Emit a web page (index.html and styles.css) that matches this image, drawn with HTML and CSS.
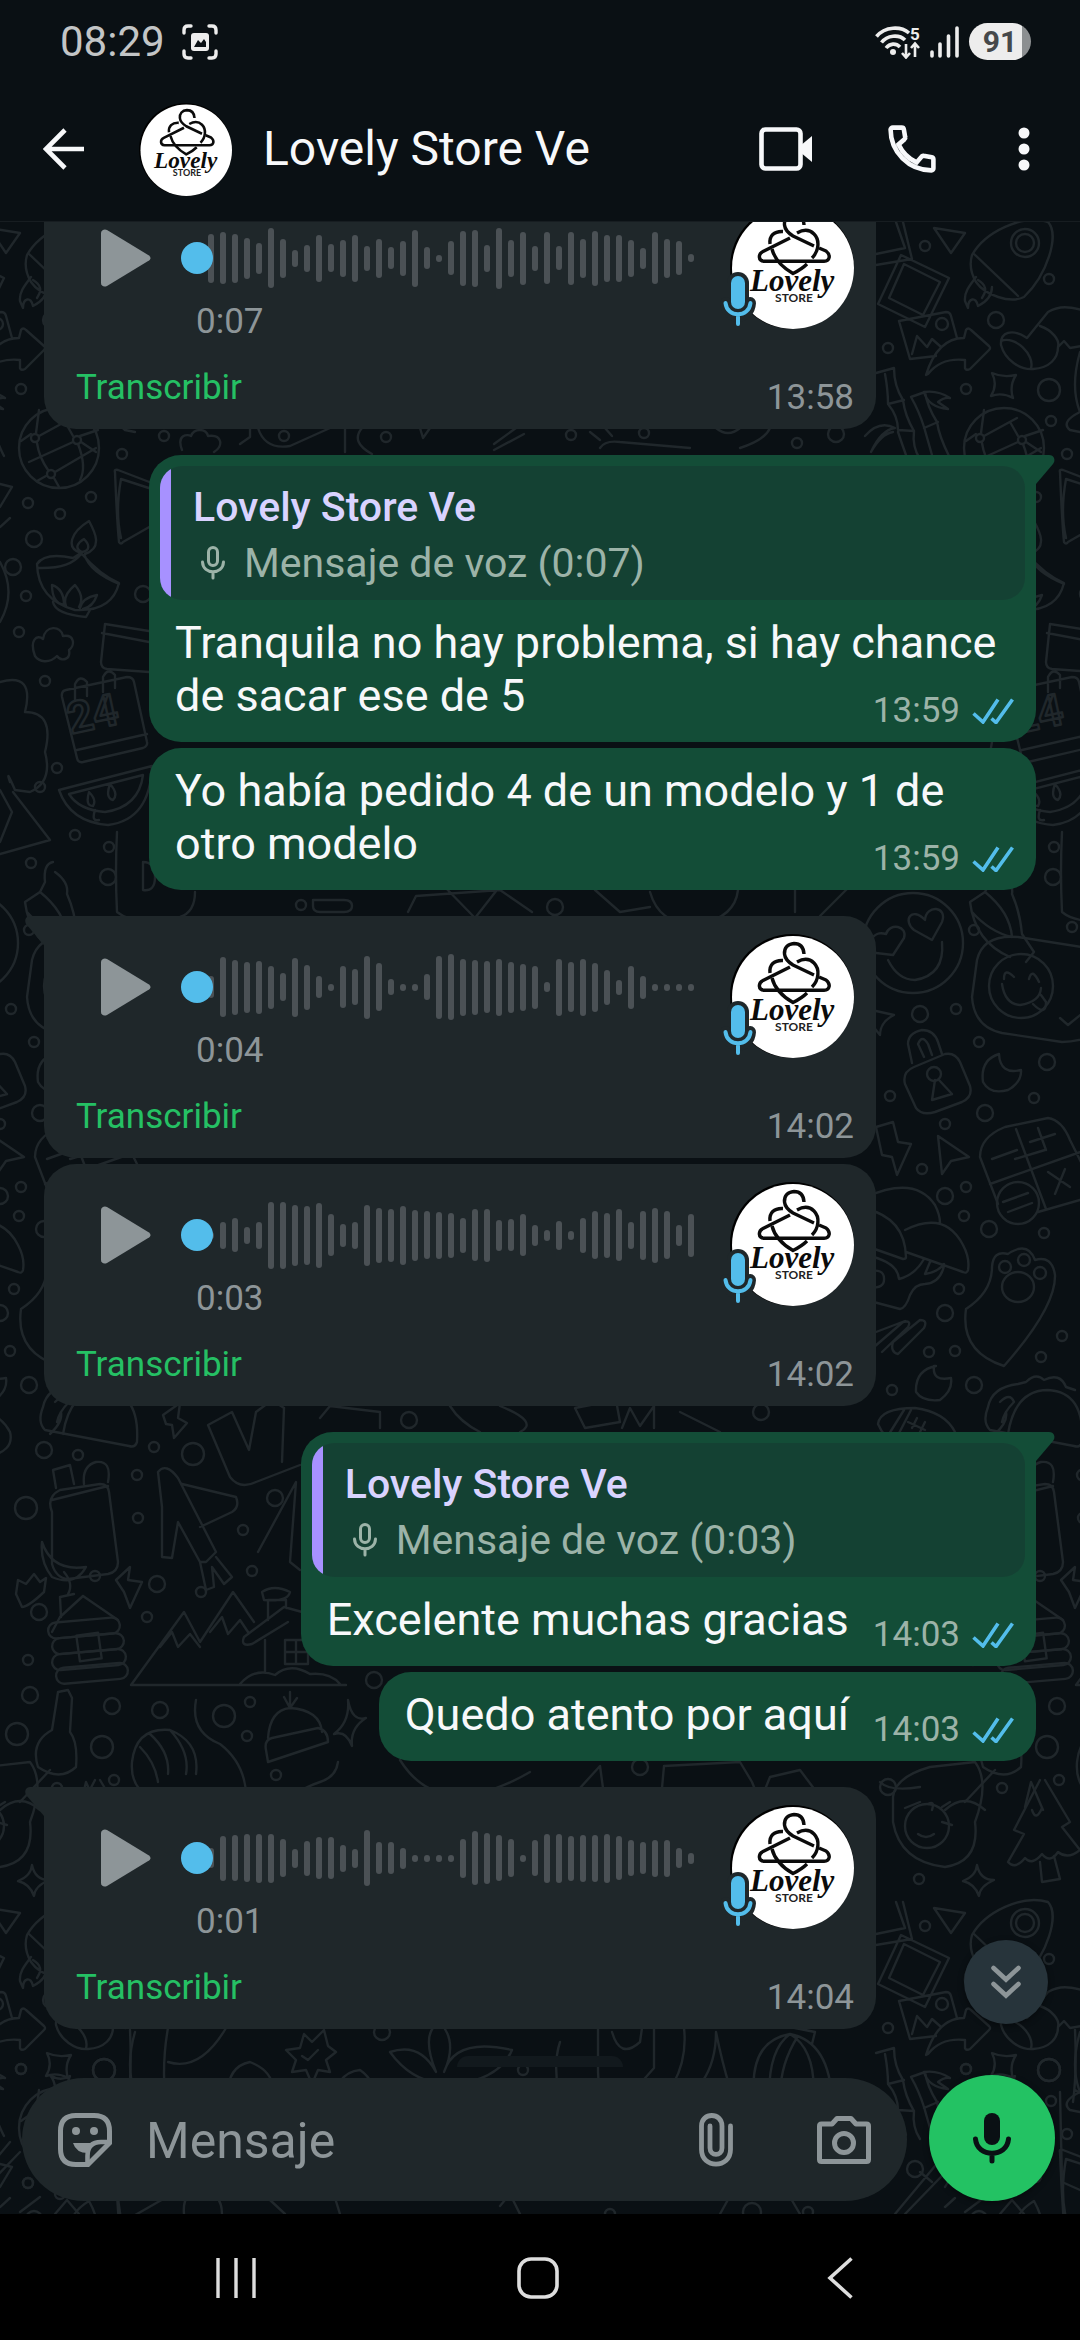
FILE: index.html
```html
<!DOCTYPE html>
<html lang="es">
<head>
<meta charset="utf-8">
<meta name="viewport" content="width=device-width, initial-scale=1">
<title>Lovely Store Ve</title>
<link rel="stylesheet" href="styles.css">
</head>
<body>

<svg class="sprite" aria-hidden="true">
  <symbol id="logo-art" viewBox="0 0 124 124">
    <circle cx="62" cy="62" r="62" fill="#000"/>
    <circle cx="63" cy="63" r="61" fill="#fff"/>
    <g fill="none" stroke="#0b0b0b" stroke-width="3.4" stroke-linecap="butt" stroke-linejoin="round">
      <path d="M40 39C39 31 44 26 53 26.500"/>
      <path d="M67 28C74 24 80 25 84 29C90 35 89 46 82 53"/>
      <path d="M42 44C44 52 50 61 63 68.500C70 65 74 62 77 59"/>
      <path d="M60 33L33 46.500C28 49 28 56 34 56.300H94C100 56 101 50 96 46L89 43"/>
      <path d="M74 20C73.500 12 69 9.500 64 9.500C57.500 10 54 14 54.500 20C55 25 59 28.500 63 31L84 41"/>
    </g>
  </symbol>
  <symbol id="play" viewBox="0 0 50 58">
    <path d="M4 0.500C2 0.500 0 2 0 4V54C0 57 3 58.500 6 57L48 31.500C50 30 50 28 48 26.500L6 1Z" fill="currentColor"/>
  </symbol>
  <symbol id="mic-badge" viewBox="0 0 40 60">
    <g fill="none" stroke="#1f272a" stroke-linecap="round">
      <path d="M20 12V31" stroke-width="22"/>
      <path d="M8 32C9 49 31 49 32 32" stroke-width="12"/>
    </g>
    <g fill="none" stroke="#53bdeb" stroke-linecap="round">
      <path d="M20 12V31" stroke-width="14"/>
      <path d="M7.500 32C9 47 31 47 32.500 32M20 44V53" stroke-width="4"/>
    </g>
  </symbol>
  <symbol id="mic-line" viewBox="0 0 24 34">
    <g fill="none" stroke="currentColor" stroke-width="3" stroke-linecap="round">
      <rect x="7.500" y="1.500" width="9" height="18" rx="4.500"/>
      <path d="M1.500 16C2 29 22 29 22.500 16M12 26V32"/>
    </g>
  </symbol>
  <symbol id="ticks" viewBox="0 0 42 26">
    <path d="M1.500 15.500L11 24L26 1.500M19.500 20.500L24 24.500L40.500 1.500" fill="none" stroke="#53bdeb" stroke-width="3.600"/>
  </symbol>
</svg>

<header class="top">
  <div class="status">
    <span class="clock">08:29</span>
    <svg class="shot" width="36" height="36" viewBox="0 0 36 36" aria-hidden="true">
      <g fill="none" stroke="#ededed" stroke-width="3.400" stroke-linecap="round">
        <path d="M2 9V6Q2 2 6 2H9M27 2H30Q34 2 34 6V9M34 27V30Q34 34 30 34H27M9 34H6Q2 34 2 30V27"/>
      </g>
      <rect x="9" y="9" width="18" height="18" rx="3" fill="#ededed"/>
      <path d="M12 23L16 16L19 19L22 15L24 18V23Z" fill="#0a1014"/>
    </svg>
    <span class="spacer"></span>
    <svg width="46" height="34" viewBox="0 0 46 34" aria-hidden="true">
      <g fill="none" stroke="#ededed" stroke-width="3.600">
        <path d="M1.500 11.500C10 1 26 1 34 8M6.500 17.500C12 10 24 9 30 15M11 23C15 18 21 18 25 22"/>
      </g>
      <circle cx="18" cy="27" r="3" fill="#ededed"/>
      <path d="M31 19V32M27 28L31 32.500L35 28M40 32V19M36 23L40 18.500L44 23" fill="none" stroke="#ededed" stroke-width="2.600"/>
      <text class="band" x="35" y="15">5</text>
    </svg>
    <svg class="bars" width="30" height="32" viewBox="0 0 30 32" aria-hidden="true">
      <path d="M3 26V30M11 18V30M19.500 10V30M28 2V30" fill="none" stroke="#ededed" stroke-width="3.600" stroke-linecap="round"/>
    </svg>
    <span class="battery">91</span>
  </div>
  <div class="appbar">
    <button class="icon-btn back" aria-label="Atrás">
      <svg width="42" height="42" viewBox="0 0 42 42"><path d="M41 21H3M22 2L3 21L22 40" fill="none" stroke="currentColor" stroke-width="4.600"/></svg>
    </button>
    <svg class="contact-pic" viewBox="0 0 124 124"><use href="#logo-art"/><text class="logo-script" x="20" y="86">Lovely</text><text class="logo-caps" x="64" y="97">STORE</text></svg>
    <h1 class="contact">Lovely Store Ve</h1>
    <button class="icon-btn video" aria-label="Videollamada">
      <svg width="54" height="44" viewBox="0 0 54 44"><rect x="2.500" y="2.500" width="39" height="39" rx="4" fill="none" stroke="currentColor" stroke-width="4.600"/><path d="M41 19L53 9V35L41 25Z" fill="currentColor"/></svg>
    </button>
    <button class="icon-btn phone" aria-label="Llamar">
      <svg width="48" height="48" viewBox="0 0 24 24"><path d="M4.200 1.300H6.900C7.400 1.300 7.800 1.600 7.900 2.100L8.600 6.200C8.700 6.600 8.600 6.900 8.300 7.100L5.300 9.700C7.200 13.700 10.300 16.800 14.300 18.700L16.900 15.700C17.100 15.400 17.400 15.300 17.800 15.400L21.900 16.100C22.400 16.200 22.700 16.600 22.700 17.100V21.600C22.700 22.200 22.300 22.700 21.700 22.700C10.400 22.700 1.300 13.600 1.300 2.300C1.300 1.700 1.800 1.300 2.400 1.300Z" fill="none" stroke="currentColor" stroke-width="2.300"/></svg>
    </button>
    <button class="icon-btn" aria-label="Más opciones">
      <svg width="12" height="44" viewBox="0 0 12 44"><g fill="currentColor"><circle cx="6" cy="6" r="5.500"/><circle cx="6" cy="22" r="5.500"/><circle cx="6" cy="38" r="5.500"/></g></svg>
    </button>
  </div>
</header>

<main class="chat">
  <svg class="wallpaper" aria-hidden="true">
    <defs>
      <g id="doodles">
        <!-- photos, rocket, picture, arrow, bamboo -->
        <path d="M903 0L912 37L876 43M896 0L905 26L876 32M934 6L965 11L951 31ZM901 33L949 56L925 105L878 82ZM904 42L940 60L923 93L889 76ZM899 99L946 90Q950 90 951 94L957 116M899 99L910 137L936 134M912 132L917 114L927 125L932 117L940 124M926 153C935 124 950 116 964 116L966 108Q968 105 971 108L989 124Q991 126 989 128L970 147Q966 149 965 146V138C945 136 935 143 928 152ZM972 33C985 10 1022 -8 1048 0C1060 13 1047 53 1024 75C1010 82 985 73 976 60C970 50 970 40 972 33ZM974 32L1018 74M976 55C970 63 964 70 965 79L968 86C968 76 976 74 978 84C986 80 992 74 992 65M978 58Q990 65 982 76"/>
        <path d="M1001 123C1000 110 1012 106 1027 116L1048 90C1060 83 1070 85 1082 88M1001 123C1005 138 1020 148 1033 147C1050 146 1058 136 1058 125L1064 119L1070 126L1082 124M1001 119C1015 113 1035 133 1031 146M1040 104C1052 108 1060 118 1058 125M992 151Q1003 156 1016 153Q1009 164 1013 176Q1002 170 991 174Q998 163 992 151ZM1080 130Q1070 165 1080 190Q1060 200 1070 208L1080 210"/>
        <path d="M876 151L894 146Q894 164 903 178Q905 194 914 209Q912 225 920 237M885 152Q888 168 888 182L904 178M888 182Q898 194 898 208L914 209M898 210Q902 222 906 233M911 175L925 170Q927 184 937 200Q939 214 949 234M911 175Q919 189 924 205Q928 219 932 233M924 206L938 200M865 214Q879 198 895 206Q881 208 871 230Q881 212 893 210M924 170Q938 168 950 176Q944 175 938 180L948 187Q928 185 924 170"/>
        <circle cx="1025" cy="21" r="14"/><circle cx="1025" cy="21" r="9"/><circle cx="942" cy="102" r="6"/>
        <circle cx="1004" cy="226" r="40"/>
        <path d="M984 214L1017 196M976 212L966 219M981 211L984 188M982 221Q984 235 993 248M974 240L1018 220M1026 220L1041 230M1018 214Q1013 205 1010 200M1025 214L1043 208M1023 222Q1032 245 1025 258M991 254L982 259M999 256L1004 265M1000 250L1041 226"/>
        <circle cx="980" cy="216" r="4"/><circle cx="1022" cy="218" r="4"/><circle cx="996" cy="252" r="4"/>
        <!-- flag, oil lamp -->
        <path d="M1060 250Q1059 247 1063 248L1110 266M1060 250Q1062 300 1064 320Q1066 323 1068 320L1110 296M1066 257L1100 268M1066 257Q1060 290 1066 316M1026 331C1010 326 1016 310 1034 299C1040 310 1048 326 1030 332M1027 330C1018 326 1024 320 1029 317C1035 323 1035 329 1027 330M982 342Q990 330 1018 336L1026 331Q1045 353 1064 361Q1057 390 1020 388Q983 378 982 342ZM983 346Q1015 347 1026 332M1030 334Q1035 350 1064 362M997 363Q1009 367 1009 383Q997 381 997 363ZM1011 384Q1007 374 1020 363Q1030 375 1024 385M1025 386Q1027 376 1042 373Q1038 385 1028 387M998 380Q1000 392 1031 395L1035 388M945 262L957 265L945 285M945 305L955 296M945 340Q962 370 945 400"/>
        <!-- cloud, box, calendar, melon, chilies -->
        <path d="M980 434C974 418 982 412 988 417C990 403 1006 403 1008 414C1020 412 1020 424 1014 428C1016 438 1006 440 1002 434C994 442 984 440 980 434ZM1050 402L1100 410M1050 402L1046 440Q1046 446 1052 447L1094 450M1047 411L1094 420M1007 475Q1006 469 1011 468L1072 455Q1078 455 1079 460L1092 520Q1093 524 1088 526L1028 540Q1023 541 1022 536ZM1022 528L1092 512M1020 478V462Q1025 452 1032 460V474M1048 470V455Q1053 445 1060 453V466M1004 568L1097 544Q1095 598 1053 603Q1015 600 1004 568ZM1014 572L1088 553Q1084 585 1050 590Q1024 588 1014 572ZM1034 570Q1030 584 1038 584Q1042 578 1034 570ZM1055 562Q1050 576 1058 578Q1064 572 1055 562ZM1040 588Q1036 600 1044 598M945 460Q980 450 970 490Q1000 490 990 530Q998 560 975 570L960 568Q950 545 955 560M958 570L995 618L945 632M945 568L957 590L945 620"/>
        <path d="M998 640Q988 642 990 660L985 670Q1010 690 1012 715Q990 710 972 690M985 670L970 680Q975 720 1010 735M1000 650Q1014 660 1012 672Q1020 690 1022 712L1034 730L1026 740M1062 610Q1060 650 1062 690Q1080 705 1125 695Q1140 690 1140 670M1088 640Q1100 640 1100 655Q1100 670 1088 668Z"/>
        <text class="doodle-num" x="1016" y="512" transform="rotate(-12 1016 512)">24</text>
        <!-- smileys, padlock, moon, bolt, cursor, calculator -->
        <circle cx="913" cy="721" r="50"/><path d="M888 738Q898 758 915 758Q945 753 942 720M932 718L914 708C902 698 912 684 925 698C926 682 948 684 942 700ZM893 733L876 731C866 722 872 708 886 712C890 700 908 704 904 716Z"/>
        <path d="M977 738Q983 712 1018 715L1082 725M977 738L972 775Q974 805 1002 811L1062 820Q1075 820 1090 815M1004 757Q1004 745 1014 755M1029 757Q1032 745 1039 760M1002 762Q1005 782 1020 783Q1040 780 1041 766M1033 782Q1046 795 1046 780L1041 773M1060 796L1068 803L1084 790"/><circle cx="1021" cy="764" r="32"/>
        <path d="M876 789L894 793Q880 800 880 813L872 803M912 841L908 822Q908 811 922 808Q934 808 938 820L942 832M924 835L918 822Q922 812 928 822L932 833M905 862Q902 850 914 845L945 832Q955 830 960 840L970 864Q973 875 962 880L935 890Q922 894 916 886ZM939 858L952 872L932 878L935 858M999 832Q980 838 983 860Q990 873 1008 868Q1022 860 1021 848Q1000 853 999 832ZM876 905L893 900L898 920L911 922L897 953L892 935L882 933ZM938 914L969 935L951 939L942 952ZM980 935Q980 915 1005 905L1048 896Q1062 898 1070 918L1092 962Q1092 975 1080 978L1038 990M980 935L998 982M1016 907L1046 987M990 962L1086 928M992 937L1017 928M1030 920L1055 912M1038 906L1046 928M1048 950L1070 965M1065 947L1055 972M1003 980L1028 971M1008 990L1032 981"/>
        <circle cx="934" cy="852" r="7"/><circle cx="1018" cy="981" r="21"/>
        <!-- mushrooms, paw, ball, taco -->
        <path d="M866 975Q915 953 935 983Q940 993 940 1001M866 987Q905 996 906 1035Q906 1037 903 1037L866 1024M905 1008Q945 988 963 1023Q970 1036 968 1048Q967 1052 963 1050L906 1030M866 1033Q898 1040 899 1057Q915 1053 924 1037M925 1052Q938 1050 944 1042M930 1040L925 1052M866 1078L900 1087Q906 1086 910 1073Q915 1062 925 1062Q940 1061 944 1044M866 1050Q885 1045 884 1058Q884 1066 870 1066M966 1087Q960 1130 1004 1144Q1056 1085 1055 1053Q1052 1033 1035 1038Q1030 1024 1018 1027Q1010 1030 1008 1032Q993 1028 992 1045Q992 1070 966 1087ZM876 1110L905 1099M874 1125L903 1100Q912 1098 908 1105L882 1130M893 1120L920 1098Q928 1098 924 1106L898 1132Q890 1130 893 1120ZM936 1144Q915 1148 916 1170Q923 1180 940 1178Q953 1168 951 1156Q932 1160 934 1144ZM878 1202Q880 1186 915 1186Q945 1190 955 1210Q960 1230 930 1235Q890 1230 878 1202ZM889 1212L904 1188M897 1215L911 1188M908 1200L925 1208M912 1206L917 1196M920 1210L925 1200"/>
        <circle cx="1005" cy="1045" r="6"/><circle cx="1024" cy="1038" r="6"/><circle cx="1040" cy="1051" r="6"/><ellipse cx="1018" cy="1065" rx="16" ry="15"/>
        <path d="M1008 1212Q1015 1168 1048 1168Q1085 1170 1082 1220Q1080 1226 1074 1224L990 1208Q982 1200 988 1185Q992 1165 1018 1162L1026 1160Q1036 1150 1044 1158Q1060 1150 1066 1165L1075 1168M1000 1180Q1010 1170 1014 1180Q1004 1190 1002 1200M995 1212Q1008 1200 1006 1190"/>
        <!-- bolt, mug, backpack, bird -->
        <path d="M163 1193L180 1181L178 1196L187 1201L174 1216L172 1203L166 1202ZM208 1203L232 1190L249 1228L256 1190L272 1178L284 1186M208 1203L230 1255Q240 1268 256 1260L300 1243M284 1186L282 1240M52 1290Q46 1275 60 1268L100 1262Q108 1262 109 1270L118 1340Q118 1350 108 1352L68 1357Q56 1356 52 1342ZM52 1278L108 1264M56 1266L53 1248L70 1243L74 1262M84 1262Q82 1244 96 1240Q112 1238 108 1260M42 1320Q52 1350 86 1345Q75 1365 52 1355Q40 1340 42 1320ZM158 1250Q166 1240 178 1256L216 1330L206 1340L200 1340L178 1300L172 1336L162 1335L162 1285ZM182 1262L236 1275Q240 1285 232 1290L200 1305M200 1340L206 1368L214 1365L212 1345L224 1362L232 1355L216 1335M258 1330L296 1260L290 1340L300 1348M116 1358L130 1345L128 1358L142 1360L130 1386L124 1370ZM16 1372L18 1358L26 1362L34 1352L40 1360L46 1356L44 1370Q28 1385 22 1385Z"/>
        <!-- cabin, mountains -->
        <path d="M83 1374L60 1395L52 1410M83 1374L118 1398M60 1375L74 1372M60 1375L61 1395M64 1350Q74 1362 68 1372"/>
        <g><rect x="48" y="1398" width="72" height="16" rx="8" transform="rotate(-5 84 1406)"/><rect x="52" y="1414" width="72" height="16" rx="8" transform="rotate(-5 84 1422)"/><rect x="52" y="1430" width="74" height="16" rx="8" transform="rotate(-5 84 1438)"/><rect x="56" y="1444" width="72" height="16" rx="8" transform="rotate(-5 84 1452)"/><rect x="78" y="1412" width="22" height="26" transform="rotate(-8 89 1425)"/></g>
        <path d="M131 1463L184 1390L200 1420L233 1370L254 1400M131 1463H346M160 1425L172 1410L178 1425L190 1412L200 1425M210 1410L222 1395L228 1412L240 1398L248 1410M244 1415L284 1385L320 1395M244 1415Q240 1425 252 1422L288 1400M265 1418V1450M285 1418H308V1442H285ZM296 1418V1442M285 1430H308M240 1462Q255 1445 275 1453Q290 1440 310 1452Q330 1450 340 1462M268 1398V1378H286V1386M262 1370Q274 1362 290 1370Q288 1380 264 1378Z"/>
        <!-- guitar, croissant, hat, star -->
        <path d="M58 1470L68 1468L72 1476L70 1510Q78 1520 76 1545Q60 1560 38 1545Q30 1520 52 1508ZM0 1588Q20 1570 40 1588M20 1580L50 1548M132 1540Q136 1505 170 1508Q200 1520 196 1552M132 1540Q130 1565 150 1575M150 1512Q170 1530 168 1552M170 1508Q190 1530 186 1552M140 1525Q155 1540 158 1560M196 1478Q190 1510 220 1522Q250 1545 246 1588M268 1516Q270 1488 290 1486Q320 1488 322 1510M266 1528Q264 1518 272 1516L318 1506Q328 1508 328 1520L268 1540ZM290 1486L284 1475M290 1486L290 1470M290 1486L297 1476M348 1478Q352 1500 366 1496Q350 1506 352 1524Q346 1508 334 1512Q350 1500 348 1478ZM286 1588Q290 1570 320 1560Q336 1555 338 1540M324 1588Q330 1570 350 1568Q372 1572 378 1588M80 1585L86 1560L98 1588"/>
        <!-- items between messages -->
        <path d="M318 0V10M313 678H344Q352 678 352 684Q352 690 344 690H320Q313 690 313 684ZM408 690L416 674L500 668L532 690M440 660L475 696L500 664M595 668L620 690L650 685M650 670Q660 705 700 702Q735 695 738 668M795 690L795 660M820 694L850 664M182 228C176 212 188 212 191 214C194 206 206 206 208 214C222 212 224 224 214 230M240 222L250 215V206M258 206Q265 228 290 224L330 206M345 206V230M362 206Q350 220 372 232M420 206L423 216L430 206M494 222L516 206M494 228L524 212M600 226Q605 218 620 220L690 226M740 226Q765 218 770 206M716 206Q728 216 740 206M590 210L600 218M605 206L612 214M70 937L100 928M320 1196L330 1184L380 1190L380 1206M450 1184Q460 1200 480 1210M500 1184Q540 1200 520 1210M575 1186L616 1178L620 1200L585 1206ZM622 1206L630 1186L640 1204L654 1184V1206M680 1190L720 1210M880 1560Q890 1570 920 1565M400 1538Q440 1602 530 1550M560 1588L600 1544L606 1588M660 1588L664 1544L740 1540L752 1560L760 1580L770 1555L800 1548L830 1588"/>
        <!-- baby, pine tree, spark -->
        <path d="M893 1575Q895 1555 930 1545L975 1540Q990 1560 975 1600Q980 1640 945 1645Q900 1640 893 1600ZM905 1586L920 1580M942 1585L950 1580M942 1600L952 1603M928 1582Q935 1578 932 1588M918 1612Q926 1618 934 1612M1040 1558L1014 1608L1024 1612L1008 1640Q1015 1648 1025 1636Q1032 1644 1042 1632Q1050 1642 1058 1630Q1068 1638 1080 1628L1062 1605L1070 1600L1045 1558M1040 1640L1042 1660L1060 1657L1054 1634M977 1643Q980 1658 994 1658Q980 1664 979 1674Q975 1662 963 1659Q976 1654 977 1643ZM1032 1588Q1036 1600 1042 1586"/><circle cx="927" cy="1604" r="22"/>
        <!-- bottom row: shoe, star badge, flower, ghost, pumpkin, tools -->
        <path d="M50 1880Q60 1866 50 1853Q60 1860 70 1854Q64 1866 72 1880Q60 1872 50 1880ZM130 1808Q132 1850 128 1880M168 1806Q160 1850 168 1900M168 1840Q200 1850 226 1806M228 1880Q225 1845 250 1840Q275 1850 272 1870L268 1896M130 1868Q150 1880 168 1866M286 1828L300 1826L304 1812L312 1820L324 1808L328 1824L336 1830L326 1838L330 1850L318 1848L312 1862L306 1848L292 1850L296 1838ZM302 1834L308 1838L318 1828M330 1890Q335 1850 360 1848Q378 1860 376 1890M442 1862Q410 1858 390 1830Q420 1820 436 1850Q420 1810 440 1800Q458 1820 444 1850Q455 1815 512 1828Q500 1858 448 1864M442 1872Q420 1870 410 1885M448 1872Q470 1870 480 1880M560 1820Q550 1850 566 1900M598 1806V1850Q600 1875 596 1900M654 1806V1846L615 1890H596M684 1806Q690 1860 640 1900M702 1860Q716 1840 716 1810Q722 1840 730 1866ZM612 1810Q620 1838 640 1820L642 1806M756 1890Q744 1820 790 1812Q830 1820 832 1880M770 1890Q765 1830 790 1812M812 1890Q820 1830 790 1812M782 1890Q775 1850 798 1814M795 1806L815 1810L812 1822M20 1990L40 1975M184 1992Q182 1970 200 1968Q222 1970 222 1992M270 1978L285 1992M330 1960L340 1992M500 1984L510 1972L520 1992M720 1992L735 1965L790 1975L800 1992M895 1992L955 1920M905 1992L965 1930M920 1950L932 1960M1060 1870L1062 1960L1080 1968M1000 1992L1012 1978L1024 1992"/>
        <circle cx="442" cy="1866" r="8"/><circle cx="752" cy="1990" r="9"/>
        <g>
          <circle cx="925" cy="24" r="5"/><circle cx="1049" cy="57" r="5"/><circle cx="996" cy="98" r="8"/><circle cx="888" cy="126" r="5"/><circle cx="966" cy="167" r="5"/><circle cx="1049" cy="168" r="11"/><circle cx="1051" cy="199" r="5"/><circle cx="1067" cy="232" r="5"/><circle cx="164" cy="214" r="5"/><circle cx="284" cy="214" r="5"/><circle cx="386" cy="215" r="5"/><circle cx="571" cy="213" r="5"/><circle cx="644" cy="211" r="5"/><circle cx="797" cy="221" r="5"/><circle cx="836" cy="212" r="8"/>
          <circle cx="973" cy="281" r="5"/><circle cx="1036" cy="275" r="5"/><circle cx="1005" cy="292" r="5"/><circle cx="979" cy="317" r="8"/><circle cx="958" cy="345" r="8"/><circle cx="1088" cy="372" r="8"/><circle cx="971" cy="374" r="5"/><circle cx="964" cy="410" r="5"/><circle cx="990" cy="459" r="5"/><circle cx="1002" cy="546" r="5"/><circle cx="985" cy="565" r="5"/><circle cx="1020" cy="613" r="5"/><circle cx="1054" cy="625" r="5"/><circle cx="1053" cy="655" r="8"/><circle cx="976" cy="641" r="5"/><circle cx="301" cy="683" r="5"/><circle cx="555" cy="685" r="8"/>
          <circle cx="974" cy="708" r="5"/><circle cx="1072" cy="705" r="5"/><circle cx="920" cy="792" r="8"/><circle cx="956" cy="787" r="5"/><circle cx="979" cy="820" r="5"/><circle cx="1047" cy="840" r="8"/><circle cx="1034" cy="876" r="5"/><circle cx="890" cy="874" r="5"/><circle cx="985" cy="891" r="8"/><circle cx="945" cy="902" r="5"/><circle cx="922" cy="947" r="5"/><circle cx="945" cy="974" r="8"/><circle cx="966" cy="965" r="5"/><circle cx="964" cy="994" r="5"/><circle cx="989" cy="1007" r="8"/><circle cx="1044" cy="1011" r="5"/><circle cx="959" cy="1067" r="5"/><circle cx="945" cy="1091" r="8"/><circle cx="929" cy="1130" r="5"/><circle cx="955" cy="1129" r="5"/><circle cx="974" cy="1163" r="8"/><circle cx="892" cy="1168" r="5"/><circle cx="1062" cy="1114" r="5"/><circle cx="1041" cy="1135" r="5"/><circle cx="409" cy="1198" r="8"/><circle cx="761" cy="1190" r="8"/>
          <circle cx="44" cy="1228" r="8"/><circle cx="78" cy="1233" r="5"/><circle cx="154" cy="1225" r="5"/><circle cx="193" cy="1232" r="11"/><circle cx="137" cy="1253" r="5"/><circle cx="26" cy="1286" r="11"/><circle cx="138" cy="1296" r="5"/><circle cx="275" cy="1276" r="8"/><circle cx="243" cy="1308" r="5"/><circle cx="252" cy="1349" r="5"/><circle cx="157" cy="1362" r="8"/><circle cx="201" cy="1370" r="5"/><circle cx="95" cy="1354" r="5"/><circle cx="39" cy="1390" r="8"/><circle cx="147" cy="1395" r="5"/><circle cx="28" cy="1438" r="5"/><circle cx="30" cy="1473" r="8"/><circle cx="112" cy="1484" r="8"/><circle cx="160" cy="1488" r="8"/><circle cx="250" cy="1480" r="5"/><circle cx="224" cy="1494" r="11"/><circle cx="374" cy="1458" r="8"/><circle cx="17" cy="1512" r="11"/><circle cx="102" cy="1525" r="11"/><circle cx="247" cy="1514" r="5"/><circle cx="114" cy="1558" r="5"/><circle cx="276" cy="1553" r="5"/><circle cx="640" cy="1545" r="8"/>
          <circle cx="888" cy="1565" r="8"/><circle cx="1002" cy="1566" r="5"/><circle cx="919" cy="1657" r="5"/><circle cx="21" cy="1847" r="5"/><circle cx="104" cy="1848" r="11"/><circle cx="382" cy="1810" r="8"/><circle cx="523" cy="1848" r="5"/><circle cx="915" cy="1947" r="8"/><circle cx="28" cy="1961" r="5"/><circle cx="610" cy="1992" r="5"/><circle cx="808" cy="1990" r="5"/>
        </g>
      </g>
    </defs>
    <use href="#doodles"/>
    <use href="#doodles" x="-945"/>
    <use href="#doodles" x="945"/>
    <use href="#doodles" y="1680"/>
    <use href="#doodles" x="-945" y="1680"/>
  </svg>

  <section class="thread">
    <article class="bubble in voice tail-in">
      <div class="player">
        <button class="play" aria-label="Reproducir"><svg width="50" height="58"><use href="#play"/></svg></button>
        <div class="track">
          <div class="wave" data-levels="49 52 49 41 31 60 39 17 27 47 28 37 47 25 39 22 35 57 22 7 34 55 57 27 61 37 53 25 52 24 53 39 55 47 47 37 21 52 39 34 8"><input class="seek" type="range" min="0" max="7" value="0" aria-label="Posición"></div>
          <span class="dim">0:07</span>
        </div>
        <div class="sender"><svg class="pic" viewBox="0 0 124 124"><use href="#logo-art"/><text class="logo-script" x="20" y="86">Lovely</text><text class="logo-caps" x="64" y="97">STORE</text></svg><svg class="badge"><use href="#mic-badge"/></svg></div>
      </div>
      <div class="voice-foot"><button class="transcribe">Transcribir</button><time class="dim">13:58</time></div>
    </article>

    <article class="bubble out first tail-out">
      <blockquote class="quote">
        <strong>Lovely Store Ve</strong>
        <span class="quote-text"><svg width="24" height="34"><use href="#mic-line"/></svg>Mensaje de voz (0:07)</span>
      </blockquote>
      <p class="body">Tranquila no hay problema, si hay chance de sacar ese de 5<span class="meta"><time>13:59</time><svg width="42" height="26"><use href="#ticks"/></svg></span></p>
    </article>

    <article class="bubble out">
      <p class="body">Yo había pedido 4 de un modelo y 1 de otro modelo<span class="meta"><time>13:59</time><svg width="42" height="26"><use href="#ticks"/></svg></span></p>
    </article>

    <article class="bubble in voice first tail-in">
      <div class="player">
        <button class="play" aria-label="Reproducir"><svg width="50" height="58"><use href="#play"/></svg></button>
        <div class="track">
          <div class="wave" data-levels="22 60 55 51 53 43 28 59 45 22 7 42 36 63 48 16 7 7 26 63 66 57 55 52 57 51 47 43 10 57 50 57 49 35 15 43 23 7 7 7 7"><input class="seek" type="range" min="0" max="4" value="0" aria-label="Posición"></div>
          <span class="dim">0:04</span>
        </div>
        <div class="sender"><svg class="pic" viewBox="0 0 124 124"><use href="#logo-art"/><text class="logo-script" x="20" y="86">Lovely</text><text class="logo-caps" x="64" y="97">STORE</text></svg><svg class="badge"><use href="#mic-badge"/></svg></div>
      </div>
      <div class="voice-foot"><button class="transcribe">Transcribir</button><time class="dim">14:02</time></div>
    </article>

    <article class="bubble in voice">
      <div class="player">
        <button class="play" aria-label="Reproducir"><svg width="50" height="58"><use href="#play"/></svg></button>
        <div class="track">
          <div class="wave" data-levels="7 27 34 17 27 67 67 61 59 65 42 23 27 61 55 53 59 51 48 47 45 35 52 53 31 32 42 21 11 29 9 35 48 45 52 27 49 55 48 21 43"><input class="seek" type="range" min="0" max="3" value="0" aria-label="Posición"></div>
          <span class="dim">0:03</span>
        </div>
        <div class="sender"><svg class="pic" viewBox="0 0 124 124"><use href="#logo-art"/><text class="logo-script" x="20" y="86">Lovely</text><text class="logo-caps" x="64" y="97">STORE</text></svg><svg class="badge"><use href="#mic-badge"/></svg></div>
      </div>
      <div class="voice-foot"><button class="transcribe">Transcribir</button><time class="dim">14:02</time></div>
    </article>

    <article class="bubble out first tail-out">
      <blockquote class="quote">
        <strong>Lovely Store Ve</strong>
        <span class="quote-text"><svg width="24" height="34"><use href="#mic-line"/></svg>Mensaje de voz (0:03)</span>
      </blockquote>
      <p class="body">Excelente muchas gracias<span class="meta"><time>14:03</time><svg width="42" height="26"><use href="#ticks"/></svg></span></p>
    </article>

    <article class="bubble out">
      <p class="body">Quedo atento por aquí<span class="meta"><time>14:03</time><svg width="42" height="26"><use href="#ticks"/></svg></span></p>
    </article>

    <article class="bubble in voice first tail-in">
      <div class="player">
        <button class="play" aria-label="Reproducir"><svg width="50" height="58"><use href="#play"/></svg></button>
        <div class="track">
          <div class="wave" data-levels="20 45 46 48 49 49 38 19 35 42 42 27 19 56 32 32 21 7 7 7 7 39 54 51 46 38 7 36 49 49 45 47 47 49 44 36 32 37 37 20 11"><input class="seek" type="range" min="0" max="1" value="0" aria-label="Posición"></div>
          <span class="dim">0:01</span>
        </div>
        <div class="sender"><svg class="pic" viewBox="0 0 124 124"><use href="#logo-art"/><text class="logo-script" x="20" y="86">Lovely</text><text class="logo-caps" x="64" y="97">STORE</text></svg><svg class="badge"><use href="#mic-badge"/></svg></div>
      </div>
      <div class="voice-foot"><button class="transcribe">Transcribir</button><time class="dim">14:04</time></div>
    </article>

    <div class="day-chip"></div>
  </section>

  <button class="jump" aria-label="Ir al final">
    <svg width="30" height="34" viewBox="0 0 30 34"><path d="M2.500 3L15 14.500L27.500 3M2.500 19L15 30.500L27.500 19" fill="none" stroke="currentColor" stroke-width="4.600" stroke-linecap="round"/></svg>
  </button>

  <form class="composer">
    <div class="field">
      <button type="button" class="tool" aria-label="Stickers">
        <svg width="54" height="54" viewBox="0 0 54 54"><path d="M18 2.500H36Q51.500 2.500 51.500 18V30L30 51.500H18Q2.500 51.500 2.500 36V18Q2.500 2.500 18 2.500Z" fill="none" stroke="currentColor" stroke-width="5"/><path d="M29.500 51V43Q29.500 29 43 29H51" fill="none" stroke="currentColor" stroke-width="4.600"/><circle cx="18" cy="18" r="4" fill="currentColor"/><circle cx="36" cy="18" r="4" fill="currentColor"/><path d="M15 30H35Q31 32 30 40Q18 40 15 30Z" fill="currentColor"/></svg>
      </button>
      <input class="text" type="text" placeholder="Mensaje" aria-label="Mensaje">
      <button type="button" class="tool clip" aria-label="Adjuntar">
        <svg width="34" height="54" viewBox="0 0 34 54"><path d="M31.500 13V36.500C31.500 56 2.500 56 2.500 36.500V13C2.500 -1 23 -1 23 13V35C23 43.500 11 43.500 11 35V13" fill="none" stroke="currentColor" stroke-width="4.800" stroke-linecap="round"/></svg>
      </button>
      <button type="button" class="tool" aria-label="Cámara">
        <svg width="54" height="48" viewBox="0 0 54 48"><path d="M4.500 8H15L20 2.500H34L39 8H49.500Q51.500 8 51.500 10V43.500Q51.500 45.500 49.500 45.500H4.500Q2.500 45.500 2.500 43.500V10Q2.500 8 4.500 8Z" fill="none" stroke="currentColor" stroke-width="5" stroke-linejoin="round"/><circle cx="27" cy="27" r="9.500" fill="none" stroke="currentColor" stroke-width="5"/></svg>
      </button>
    </div>
    <button type="button" class="record" aria-label="Grabar mensaje de voz">
      <svg width="38" height="52" viewBox="0 0 38 52"><g fill="none" stroke="#0a1014" stroke-linecap="round"><path d="M19 9V25" stroke-width="16"/><path d="M2.500 27C4 46 34 46 35.500 27M19 42V49" stroke-width="5"/></g></svg>
    </button>
  </form>
</main>

<nav class="sysnav">
  <button aria-label="Recientes"><svg width="40" height="42" viewBox="0 0 40 42"><path d="M2 1V41M20 1V41M38 1V41" stroke="currentColor" stroke-width="3.400" fill="none"/></svg></button>
  <button aria-label="Inicio"><svg width="42" height="42" viewBox="0 0 42 42"><rect x="2" y="2" width="38" height="38" rx="12" stroke="currentColor" stroke-width="3.600" fill="none"/></svg></button>
  <button aria-label="Volver"><svg width="26" height="42" viewBox="0 0 26 42"><path d="M24.500 1.500L3 21L24.500 40.500" stroke="currentColor" stroke-width="3.600" fill="none"/></svg></button>
</nav>

<script src="script.js"></script>
</body>
</html>
```

FILE: styles.css
```css
* { box-sizing: border-box; }

body {
  margin: 0;
  height: 100vh;
  display: flex;
  flex-direction: column;
  background: #0a1014;
  color: #f7f8fa;
  font-family: Roboto, "Noto Sans", sans-serif;
}

button {
  display: flex;
  align-items: center;
  justify-content: center;
  margin: 0;
  padding: 0;
  border: 0;
  background: none;
  color: inherit;
  font: inherit;
}

svg { display: block; flex: none; }
p, h1, blockquote { margin: 0; }

.sprite { position: absolute; width: 0; height: 0; }

.logo-script { font: italic 700 31px "Liberation Serif", serif; fill: #0b0b0b; }
.logo-caps { font: 700 12px Lato, sans-serif; fill: #222; text-anchor: middle; }

/* header */
.top {
  flex: none;
  border-bottom: 1px solid #171d21;
}

.status {
  display: flex;
  align-items: center;
  height: 83px;
  padding: 0 49px 0 60px;
}
.clock { font-size: 42px; line-height: 48px; color: #c3c5c6; }
.shot { margin-left: 17px; }
.spacer { flex: 1; }
.band { font: 700 17px Roboto, sans-serif; fill: #ededed; }
.bars { margin: 0 10px 0 8px; }
.battery {
  width: 62px;
  height: 37px;
  border-radius: 19px;
  background: linear-gradient(90deg, #ededed 85%, #8c8f91 85%);
  color: #45484a;
  font-size: 30px;
  font-weight: 700;
  line-height: 38px;
  text-align: center;
}

.appbar {
  display: flex;
  align-items: center;
  height: 138px;
  padding: 0 50px 6px 43px;
}
.contact-pic { width: 93px; height: 93px; margin: 0 31px 0 54px; }
.contact { flex: 1; font-size: 48px; font-weight: 400; line-height: 56px; }
.video { margin-right: 75px; }
.phone { margin-right: 82px; }

/* conversation */
.chat {
  position: relative;
  flex: 1;
  min-height: 0;
  display: flex;
  flex-direction: column;
}
.wallpaper {
  position: absolute;
  inset: 0;
  width: 100%;
  height: 100%;
  fill: none;
  stroke: #20272b;
  stroke-width: 2.4;
  stroke-linejoin: round;
  stroke-linecap: round;
}
.doodle-num { font: 700 44px Roboto, sans-serif; }

.thread {
  position: relative;
  flex: 1;
  min-height: 0;
  overflow: hidden;
  display: flex;
  flex-direction: column;
  justify-content: flex-end;
  gap: 6px;
  padding: 0 44px;
}

.bubble {
  position: relative;
  flex: none;
  border-radius: 32px;
}
.first { margin-top: 20px; }
.in { align-self: flex-start; background: #1f272a; }
.out { align-self: flex-end; max-width: 887px; background: #134d37; }

.tail-in { border-top-left-radius: 0; }
.tail-out { border-top-right-radius: 0; }
.tail-in::before,
.tail-out::before {
  content: "";
  position: absolute;
  top: 0;
  width: 20px;
  height: 30px;
}
.tail-in::before {
  right: 100%;
  width: 19px;
  background: #1f272a;
  clip-path: path("M19 0H5C1 0 -1 4 1 8L19 29Z");
}
.tail-out::before {
  left: 100%;
  background: #134d37;
  clip-path: path("M0 0H13C18 0 20 5 17 9L0 29Z");
}

.voice { width: 832px; max-width: 100%; padding: 18px 22px 11px 57px; }
.player { display: flex; gap: 30px; }
.play { height: 70px; margin-top: 18px; color: #8d9598; }
.track { padding-top: 18px; }
.wave {
  position: relative;
  display: flex;
  align-items: center;
  gap: 6px;
  height: 70px;
  padding-left: 27px;
}
.wave span { width: 6px; border-radius: 3px; background: #4b5155; }
.seek {
  position: absolute;
  inset: 0;
  width: 100%;
  height: 70px;
  margin: 0;
  appearance: none;
  background: none;
}
.seek::-webkit-slider-thumb {
  appearance: none;
  width: 32px;
  height: 32px;
  border-radius: 50%;
  background: #53bdeb;
}
.dim { font-size: 35px; line-height: 40px; color: #8d9598; }
.track .dim { display: block; margin: 9px 0 0 15px; }

.sender { position: relative; width: 124px; height: 124px; margin-left: auto; }
.pic { width: 124px; height: 124px; }
.badge { position: absolute; left: -12px; top: 66px; width: 40px; height: 60px; }

.voice-foot {
  display: flex;
  justify-content: space-between;
  height: 50px;
  margin: 26px 0 0 -25px;
}
.voice-foot .dim { align-self: flex-end; }
.transcribe { align-self: flex-start; font-size: 35px; line-height: 40px; color: #25c064; }

.quote {
  display: flex;
  flex-direction: column;
  margin: 11px 11px 0;
  padding: 13px 22px 9px 33px;
  border-radius: 22px;
  background: linear-gradient(90deg, #a791ff 11px, #144133 11px);
  font-size: 41px;
  line-height: 56px;
}
.quote strong { font-weight: 500; color: #d9d3ff; }
.quote-text { display: flex; align-items: center; gap: 19px; padding-left: 8px; color: #9cb3a8; }

.body {
  display: flow-root;
  padding: 16px 22px 17px 26px;
  font-size: 45px;
  line-height: 53px;
}
.meta {
  float: right;
  display: flex;
  align-items: center;
  gap: 12px;
  height: 28px;
  margin: 28px 0 0 24px;
  font-size: 35px;
  line-height: 28px;
  color: #9cb3a8;
}

.day-chip {
  flex: none;
  align-self: center;
  width: 166px;
  height: 11px;
  margin-top: 21px;
  border-radius: 22px 22px 0 0;
  background: #12191d;
}

.jump {
  position: absolute;
  right: 32px;
  bottom: 190px;
  width: 84px;
  height: 84px;
  border-radius: 50%;
  background: #27343b;
  color: #8d9598;
  box-shadow: 0 2px 6px #0006;
}

/* composer */
.composer {
  position: relative;
  flex: none;
  display: flex;
  align-items: center;
  gap: 22px;
  padding: 7px 25px 13px 22px;
}
.field {
  flex: 1;
  min-width: 0;
  display: flex;
  align-items: center;
  height: 123px;
  margin-top: 4px;
  padding: 0 36px;
  border-radius: 62px;
  background: #1f272a;
}
.tool { color: #8d9598; }
.text {
  flex: 1;
  min-width: 0;
  height: 64px;
  margin: 0 20px 0 34px;
  padding: 2px 0 0;
  border: 0;
  outline: 0;
  background: none;
  color: #f7f8fa;
  font: 50px/60px Roboto, "Noto Sans", sans-serif;
}
.text::placeholder { color: #8d9598; opacity: 1; }
.clip { margin-right: 84px; }
.record {
  width: 126px;
  height: 126px;
  border-radius: 50%;
  background: #23c263;
  box-shadow: 0 2px 6px #0006;
}

.sysnav {
  flex: none;
  display: grid;
  grid-template-columns: repeat(3, 1fr);
  height: 126px;
  padding: 2px 89px 0 85px;
  background: #000;
  color: #dedede;
}
```

FILE: script.js
```js
// Draws the waveform bars of each voice message from its recorded levels.
document.querySelectorAll(".wave").forEach((wave) => {
  const seek = wave.querySelector(".seek");
  wave.dataset.levels.split(" ").forEach((level) => {
    const bar = document.createElement("span");
    bar.style.height = level + "px";
    wave.insertBefore(bar, seek);
  });
});
```
